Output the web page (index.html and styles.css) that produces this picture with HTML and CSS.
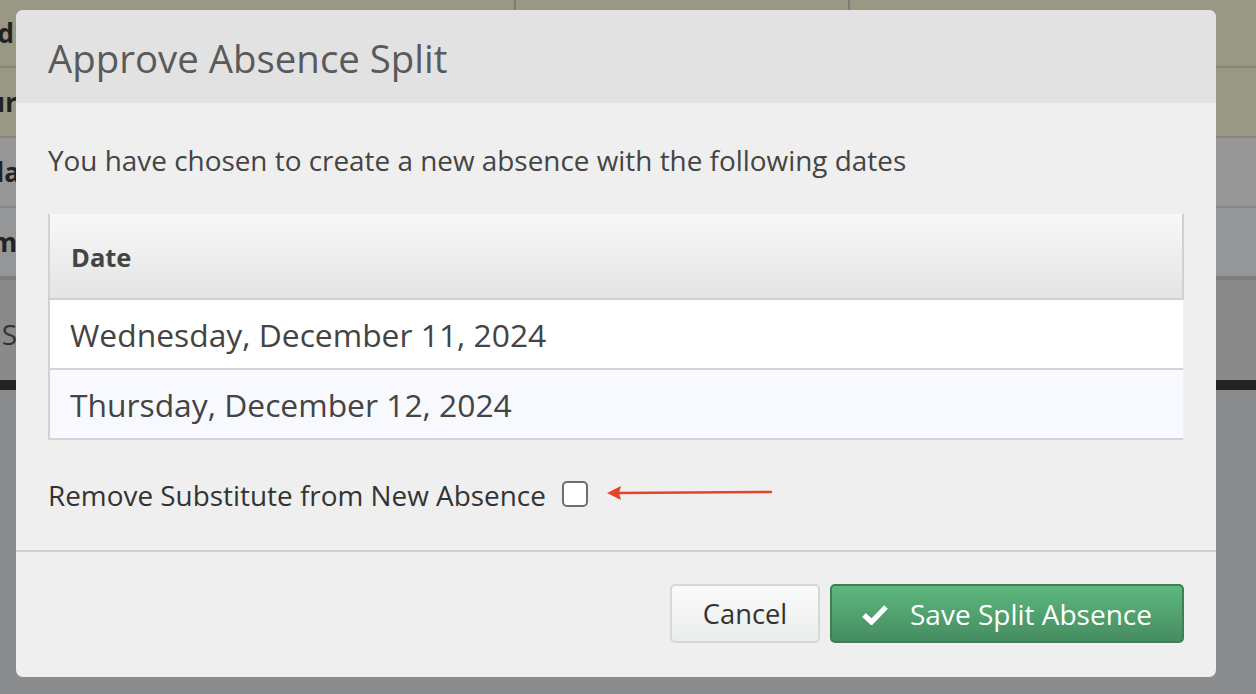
FILE: index.html
```html
<!DOCTYPE html>
<html>
<head>
<meta charset="utf-8">
<link rel="stylesheet" href="styles.css">
</head>
<body>
<div class="page">
  <div class="bg-row first olive">
    <div class="cut bold narrow"><span>Field</span></div>
    <div class="vline l1"></div><div class="vline l2"></div>
  </div>
  <div class="bg-row olive">
    <div class="cut bold"><span>Hour</span></div>
    <div class="vline l1"></div><div class="vline l2"></div>
  </div>
  <div class="bg-row grey1">
    <div class="cut bold wide"><span>Monda</span></div>
  </div>
  <div class="bg-row grey2 last">
    <div class="cut bold"><span>Nam</span></div>
  </div>
  <div class="bg-row grey3 tall">
    <div class="cut reg"><span>S</span></div>
  </div>
  <div class="dark-bar"></div>
  <div class="bg-rest"></div>
</div>

<div class="modal">
  <div class="modal-header">
    <h1 class="modal-title">Approve Absence Split</h1>
  </div>
  <div class="modal-body">
    <p class="intro">You have chosen to create a new absence with the following dates</p>
    <table class="dates">
      <thead><tr><th>Date</th></tr></thead>
      <tbody>
        <tr class="odd"><td>Wednesday, December 11, 2024</td></tr>
        <tr class="even"><td>Thursday, December 12, 2024</td></tr>
      </tbody>
    </table>
    <div class="check-row">
      <label class="check-label" for="rm">Remove Substitute from New Absence</label>
      <span class="checkbox" id="rm"></span>
      <svg class="arrow" width="170" height="20" viewBox="0 0 170 20">
        <line x1="12" y1="10" x2="166" y2="9" stroke="#e5432b" stroke-width="2.5" stroke-linecap="round"/>
        <polygon points="2,10 16,3 14,10 16,17" fill="#e5432b"/>
      </svg>
    </div>
  </div>
  <div class="modal-footer">
    <button class="btn btn-default">Cancel</button>
    <button class="btn btn-success">
      <svg class="check" width="26" height="22" viewBox="0 0 26 22">
        <path d="M2 12 L9.5 19 L24 4" fill="none" stroke="#fff" stroke-width="5.2" stroke-linejoin="miter" stroke-linecap="butt"/>
      </svg>
      <span>Save Split Absence</span>
    </button>
  </div>
</div>
</body>
</html>
```

FILE: styles.css
```css
* { box-sizing: border-box; }
html, body { margin: 0; padding: 0; }
body {
  width: 1256px;
  height: 694px;
  overflow: hidden;
  font-family: "Open Sans", "Noto Sans", sans-serif;
  background: #8b8c8d;
}

.page { display: flex; flex-direction: column; height: 694px; }
.bg-row {
  position: relative;
  height: 70px;
  flex: none;
  border-bottom: 2px solid #868680;
  display: flex;
  align-items: center;
}
.bg-row.first { height: 68px; }
.bg-row.olive { background: #999884; }
.bg-row.grey1 { background: #979797; border-bottom-color: #878787; }
.bg-row.grey2 { background: #959697; }
.bg-row.last { height: 72px; border-bottom: 4px solid #7e7e7e; }
.bg-row.grey3 { background: #8a8a8a; border-bottom: none; height: 100px; }
.cut {
  width: 17px;
  overflow: hidden;
  display: flex;
  justify-content: flex-end;
  font-size: 26px;
  color: #222;
  white-space: nowrap;
}
.cut.narrow { width: 14px; }
.cut.wide { width: 20px; }
.cut.bold { font-weight: 700; }
.cut span { flex: none; }
.cut.reg { width: 18px; color: #333; font-size: 28px; padding-right: 1px; margin-top: 8px; }
.vline {
  position: absolute;
  top: 0; bottom: 0;
  width: 2px;
  background: #7c7c7c;
}
.vline.l1 { left: 514px; }
.vline.l2 { left: 848px; }
.dark-bar { height: 10px; flex: none; background: #232323; }
.bg-rest { flex: 1; }

.modal {
  position: absolute;
  left: 16px;
  top: 10px;
  width: 1200px;
  height: 667px;
  background: #efefef;
  border-radius: 7px;
  overflow: hidden;
  display: flex;
  flex-direction: column;
}
.modal-header {
  height: 93px;
  flex: none;
  background: #e2e2e2;
  display: flex;
  align-items: center;
  padding-left: 32px;
}
.modal-title {
  margin: 0;
  font-weight: 400;
  font-size: 38.4px;
  color: #5a5a5a;
  padding-top: 2px;
}
.modal-body {
  padding: 38px 32px 0 32px;
  height: 449px;
  flex: none;
  border-bottom: 2px solid #cfcfcf;
}
.intro {
  margin: 0 0 35px 0;
  font-size: 27.9px;
  line-height: 38px;
  color: #444;
}
.dates {
  width: 1136px;
  border-collapse: collapse;
  border-left: 2px solid #d2d2d2;
}
.dates th {
  height: 85px;
  text-align: left;
  padding: 2px 0 0 21px;
  font-size: 25.5px;
  font-weight: 700;
  color: #444;
  background: linear-gradient(#f8f8f8, #e4e4e4);
  border-right: 2px solid #d0d0d0;
  border-bottom: 2px solid #d0d0d0;
}
.dates td {
  height: 70px;
  padding: 0 0 0 20px;
  font-size: 31.8px;
  color: #444;
  border-bottom: 2px solid #d4d4d4;
}
.dates tr.odd td { background: #ffffff; }
.dates tr.even td { background: #f8f9fe; }

.check-row {
  display: flex;
  align-items: center;
  margin-top: 41px;
  height: 28px;
}
.check-label {
  font-size: 27.9px;
  color: #333;
}
.checkbox {
  width: 26px;
  height: 26px;
  margin-left: 16px;
  margin-top: -2px;
  background: #fff;
  border: 2px solid #6e6e6e;
  border-radius: 5px;
}
.arrow { margin-left: 17px; margin-top: -4px; }

.modal-footer {
  flex: 1;
  display: flex;
  justify-content: flex-end;
  align-items: center;
  gap: 10px;
  padding-right: 32px;
  padding-bottom: 2px;
}
.btn {
  height: 59px;
  border-radius: 5px;
  font-family: "Open Sans", "Noto Sans", sans-serif;
  display: flex;
  align-items: center;
  justify-content: center;
  cursor: pointer;
}
.btn-default {
  width: 150px;
  font-size: 27.3px;
  background: linear-gradient(#fafafa, #ebeded);
  border: 2px solid #d6d8d8;
  color: #333;
}
.btn-success {
  width: 354px;
  font-size: 28px;
  background: linear-gradient(#5db87e, #468c60);
  border: 2px solid #3f7e57;
  color: #fff;
  gap: 22px;
  padding: 0;
}
.check { flex: none; }
```
